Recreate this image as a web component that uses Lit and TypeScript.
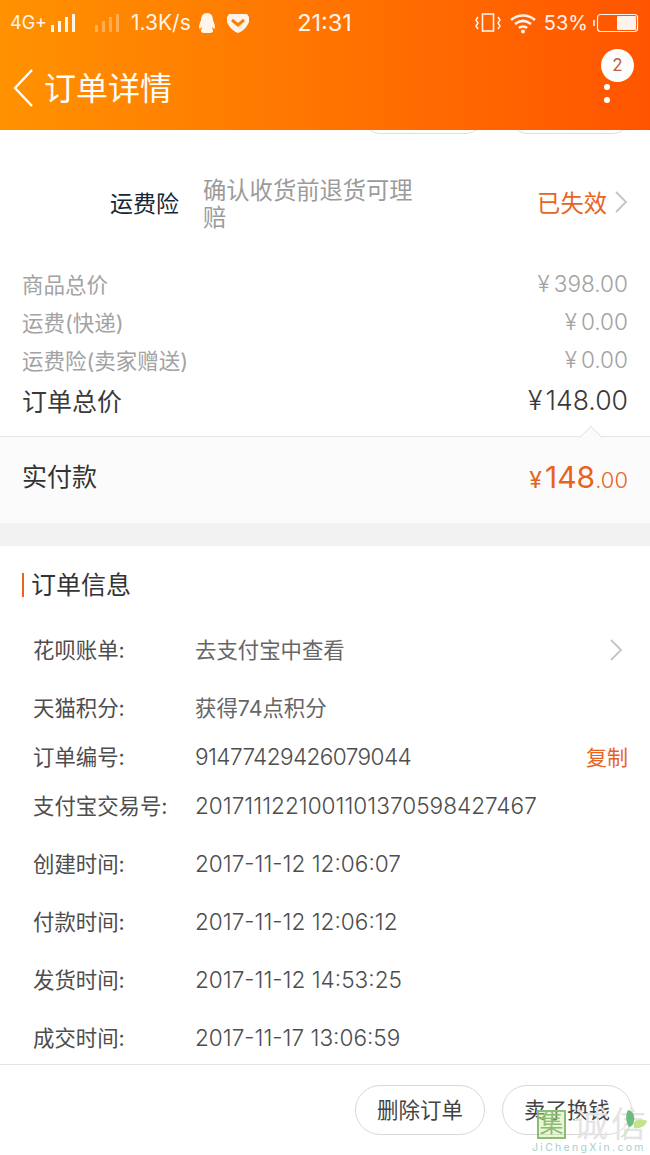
import {css, html, LitElement} from "lit";
import {customElement} from "lit/decorators.js";

const chevron = html`<svg class="chevron" width="14" height="24" viewBox="0 0 14 24"><path d="M2 2l10 10L2 22" fill="none" stroke="#c4c4c4" stroke-width="1.8"/></svg>`;

const info = [
    {label: "花呗账单:", value: "去支付宝中查看", height: 58, more: true},
    {label: "天猫积分:", value: "获得74点积分", height: 58},
    {label: "订单编号:", value: "91477429426079044", height: 40, copy: true, num: true, tight: true},
    {label: "支付宝交易号:", value: "2017111221001101370598427467", height: 58, num: true},
    {label: "创建时间:", value: "2017-11-12 12:06:07", height: 58, num: true},
    {label: "付款时间:", value: "2017-11-12 12:06:12", height: 58, num: true},
    {label: "发货时间:", value: "2017-11-12 14:53:25", height: 58, num: true},
    {label: "成交时间:", value: "2017-11-17 13:06:59", height: 58, num: true},
];

@customElement("app-root")
export class AppRoot extends LitElement {
    static styles = css`
      :host {
        display: block;
        position: relative;
        width: 650px;
        height: 1155px;
        overflow: hidden;
        background: #fff;
        font-family: Inter, "Noto Sans CJK SC", sans-serif;
        color: #333;
      }

      .header {
        height: 130px;
        background: linear-gradient(90deg, #ff9200 0%, #ff7400 50%, #ff5500 100%);
        color: #fff;
      }

      .status {
        height: 45px;
        padding: 0 11px 0 10px;
        display: flex;
        align-items: center;
        font-size: 20px;
        opacity: .92;
      }
      .status .net { font-size: 18px; }
      .status .speed { font-size: 21px; margin-left: 11px; }
      .status .left, .status .right { flex: 1; display: flex; align-items: center; }
      .status .right { justify-content: flex-end; }
      .status .time { font-size: 23.5px; width: 108px; text-align: center; }

      .bar {
        height: 85px;
        display: flex;
        align-items: center;
        padding: 0 0 1px 12px;
      }
      .title { font-size: 32px; margin: 0 0 4px 10px; flex: 1; }
      .more {
        width: 68px;
        height: 85px;
        position: relative;
      }
      .badge {
        position: absolute;
        left: 19px;
        top: 4px;
        width: 33px;
        height: 33px;
        border-radius: 50%;
        background: #fff;
        color: #b9603a;
        font-size: 17px;
        line-height: 33px;
        text-align: center;
      }
      .dot {
        position: absolute;
        left: 22px;
        width: 6px;
        height: 6px;
        border-radius: 50%;
        background: #fff;
      }

      .peek {
        height: 4px;
        overflow: hidden;
        display: flex;
        justify-content: flex-end;
        align-items: flex-end;
        gap: 23px;
        padding-right: 18px;
      }
      .peek span {
        flex: none;
        width: 124px;
        height: 40px;
        box-sizing: border-box;
        border: 1px solid #ddd;
        border-radius: 20px;
      }

      .insure {
        height: 121px;
        padding: 9px 22px 0 110px;
        display: flex;
        align-items: center;
      }
      .insure .name { width: 93px; font-size: 23px; color: #152535; margin-bottom: 3px; }
      .insure .desc { width: 214px; font-size: 23.3px; line-height: 27px; color: #9b9b9b; }
      .insure .state { margin: 0 0 3px auto; font-size: 23.3px; color: #e8641e; }
      .insure .chevron { margin: 0 0 3px 7px; }

      .prices { padding: 0 22px; }
      .price {
        height: 38px;
        display: flex;
        align-items: center;
        justify-content: space-between;
        font-size: 21.5px;
        color: #a3a3a3;
      }
      .price b { font-weight: 300; font-size: 22.6px; display: flex; align-items: center; }
      .price .yen { margin-right: 4px; }
      .price.total { height: 44px; font-size: 25px; color: #3a3a3a; }
      .price.total b { font-size: 26.6px; font-weight: 300; }
      .price.total .yen { margin-right: 3px; }

      .paid {
        position: relative;
        height: 87px;
        margin-top: 14px;
        padding: 0 22px 10px;
        box-sizing: border-box;
        border-top: 1px solid #e6e6e6;
        background: #fbfbfb;
        display: flex;
        align-items: center;
        justify-content: space-between;
        font-size: 25px;
      }
      .paid::before {
        content: "";
        position: absolute;
        right: 51px;
        top: -8px;
        width: 15px;
        height: 15px;
        background: #fbfbfb;
        border: 1px solid #e6e6e6;
        border-width: 1px 0 0 1px;
        transform: rotate(45deg);
      }
      .amount { color: #e8641e; font-size: 22px; display: flex; align-items: baseline; font-weight: 300; margin-top: 4px; }
      .amount .sign { font-size: 23px; font-weight: 400; }
      .amount .big { font-size: 30px; font-weight: 400; margin-left: 3px; }
      .amount .cents { font-size: 22px; }

      .band { height: 23px; background: #f2f2f2; }

      .section {
        margin: 27px 0 0 22px;
        height: 24px;
        padding-left: 7px;
        border-left: 2px solid #e8641e;
        font-size: 25px;
        line-height: 24px;
      }

      .rows { margin-top: 24px; padding: 0 22px 0 33px; }
      .row {
        display: flex;
        align-items: baseline;
        font-size: 21.4px;
        color: #4d4d4d;
      }
      .row .label { width: 162px; flex: none; }
      .row .value { flex: 1; color: #666; }
      .row .value.num { font-size: 22.6px; font-weight: 300; color: #4d4d4d; }
      .row .value.tight { letter-spacing: -.6px; }
      .row .copy { color: #e8641e; font-size: 21px; }
      .row .chevron { margin-right: 5px; align-self: center; }

      .footer {
        position: absolute;
        left: 0;
        right: 0;
        top: 1064px;
        height: 91px;
        background: #fff;
        border-top: 1px solid #e4e4e4;
        display: flex;
        justify-content: flex-end;
        gap: 17px;
        padding: 20px 18px 0 0;
        box-sizing: border-box;
      }
      .btn {
        width: 130px;
        height: 50px;
        box-sizing: border-box;
        border: 1px solid #d8d8d8;
        border-radius: 25px;
        font-size: 21.5px;
        line-height: 48px;
        text-align: center;
        color: #444;
      }

      .mark {
        position: absolute;
        left: 534px;
        top: 1108px;
        width: 116px;
        height: 47px;
      }
      .mark .box {
        position: absolute;
        left: 3px;
        top: 2px;
        width: 29px;
        height: 29px;
        box-sizing: border-box;
        border: 2px solid #8dbb78;
        background: rgba(200, 235, 150, .4);
        color: #8dbb78;
        font-size: 24px;
        line-height: 24px;
        text-align: center;
      }
      .mark .name {
        position: absolute;
        left: 39px;
        top: -3px;
        font-size: 35px;
        line-height: 38px;
        letter-spacing: 3px;
        color: #e4e4e4;
        white-space: nowrap;
      }
      .mark .leaf { position: absolute; left: 86px; top: 0; }
      .mark .site {
        position: absolute;
        left: -2px;
        top: 33px;
        font-size: 10.5px;
        letter-spacing: 2.3px;
        color: #a8cfc8;
        white-space: nowrap;
      }
    `

    renderStatus() {
        return html`
            <div class="status">
                <div class="left">
                    <span class="net">4G+</span>
                    <svg width="26" height="20" viewBox="0 0 26 20" style="margin-left:3px"><path d="M1 12h3v7H1zM8 8h3v11H8zM15 4h3v15h-3zM22 1h3v18h-3z" fill="#fff"/></svg>
                    <svg width="26" height="20" viewBox="0 0 26 20" style="margin-left:18px" opacity=".35"><path d="M1 12h3v7H1zM8 8h3v11H8zM15 4h3v15h-3zM22 1h3v18h-3z" fill="#fff"/></svg>
                    <span class="speed">1.3K/s</span>
                    <svg width="20" height="22" viewBox="0 0 20 22" style="margin-left:6px"><path d="M10 1c4 0 6 3 6 7 0 1 2 4 2 7 0 2-1 2-2 1l-1-1c0 2 1 2 1 4 0 2-3 2-6 2s-6 0-6-2c0-2 1-2 1-4l-1 1c-1 1-2 1-2-1 0-3 2-6 2-7 0-4 2-7 6-7z" fill="#fff"/></svg>
                    <svg width="24" height="22" viewBox="0 0 24 22" style="margin-left:9px"><path d="M3 2h18l2 3v5c-2 5-6 9-11 11C7 19 3 15 1 10V5z" fill="#fff"/><path d="M6 8l6 5 6-5" fill="none" stroke="#ff8000" stroke-width="3"/></svg>
                </div>
                <span class="time">21:31</span>
                <div class="right">
                    <svg width="26" height="22" viewBox="0 0 26 22"><rect x="7.5" y="2" width="11" height="17" fill="none" stroke="#fff" stroke-width="1.6"/><path d="M3 5l-2 3 2 3-2 3 2 3M23 5l2 3-2 3 2 3-2 3" fill="none" stroke="#fff" stroke-width="1.5"/></svg>
                    <svg width="28" height="22" viewBox="0 0 28 22" style="margin-left:8px"><path d="M2 8c7-6 17-6 24 0M6 12c5-4 11-4 16 0M10 16c2-2 6-2 8 0" fill="none" stroke="#fff" stroke-width="2.6"/><circle cx="14" cy="19.5" r="2" fill="#fff"/></svg>
                    <span style="margin-left:7px">53%</span>
                    <svg width="46" height="20" viewBox="0 0 46 20" style="margin-left:5px"><rect x="0" y="7" width="2" height="6" fill="#fff" opacity=".8"/><rect x="4.5" y="1.5" width="40" height="17" rx="3" fill="none" stroke="#fff" stroke-width="1.2"/><rect x="24" y="3" width="19" height="14" rx="1" fill="#fff"/></svg>
                </div>
            </div>
        `
    }

    renderPrice(label: string, amount: string, total = false) {
        return html`
            <div class="price ${total ? "total" : ""}">
                <span>${label}</span>
                <b><span class="yen">¥</span>${amount}</b>
            </div>
        `
    }

    render() {
        return html`
            <div class="header">
                ${this.renderStatus()}
                <div class="bar">
                    <svg width="22" height="40" viewBox="0 0 22 40"><path d="M20 2L3 20l17 18" fill="none" stroke="#fff" stroke-width="2.4"/></svg>
                    <div class="title">订单详情</div>
                    <div class="more">
                        <span class="badge">2</span>
                        <span class="dot" style="top:39px"></span>
                        <span class="dot" style="top:52px"></span>
                    </div>
                </div>
            </div>
            <div class="peek"><span></span><span></span></div>
            <div class="insure">
                <div class="name">运费险</div>
                <div class="desc">确认收货前退货可理赔</div>
                <div class="state">已失效</div>
                ${chevron}
            </div>
            <div class="prices">
                ${this.renderPrice("商品总价", "398.00")}
                ${this.renderPrice("运费(快递)", "0.00")}
                ${this.renderPrice("运费险(卖家赠送)", "0.00")}
                ${this.renderPrice("订单总价", "148.00", true)}
            </div>
            <div class="paid">
                <span>实付款</span>
                <div class="amount"><span class="sign">¥</span><span class="big">148</span><span class="cents">.00</span></div>
            </div>
            <div class="band"></div>
            <div class="section">订单信息</div>
            <div class="rows">
                ${info.map(r => html`
                    <div class="row" style="height:${r.height}px;line-height:${r.height}px">
                        <span class="label">${r.label}</span>
                        <span class="value ${r.num ? "num" : ""} ${r.tight ? "tight" : ""}">${r.value}</span>
                        ${r.copy ? html`<span class="copy">复制</span>` : ""}
                        ${r.more ? chevron : ""}
                    </div>
                `)}
            </div>
            <div class="footer">
                <div class="btn">删除订单</div>
                <div class="btn">卖了换钱</div>
            </div>
            <div class="mark">
                <div class="box">集</div>
                <div class="name">诚信</div>
                <svg class="leaf" width="28" height="32" viewBox="0 0 28 32"><path d="M8 2c5 1 7 6 6 11-1 4-3 6-5 6-3-4-4-12-1-17z" fill="#6dbb80"/><path d="M14 14c4-3 9-3 13-1-1 5-7 8-13 7z" fill="#c3e38c"/><path d="M9 19c-1 4-4 8-8 10" fill="none" stroke="#cfe3c0" stroke-width="1.5"/></svg>
                <div class="site">JiChengXin.com</div>
            </div>
        `
    }
}
